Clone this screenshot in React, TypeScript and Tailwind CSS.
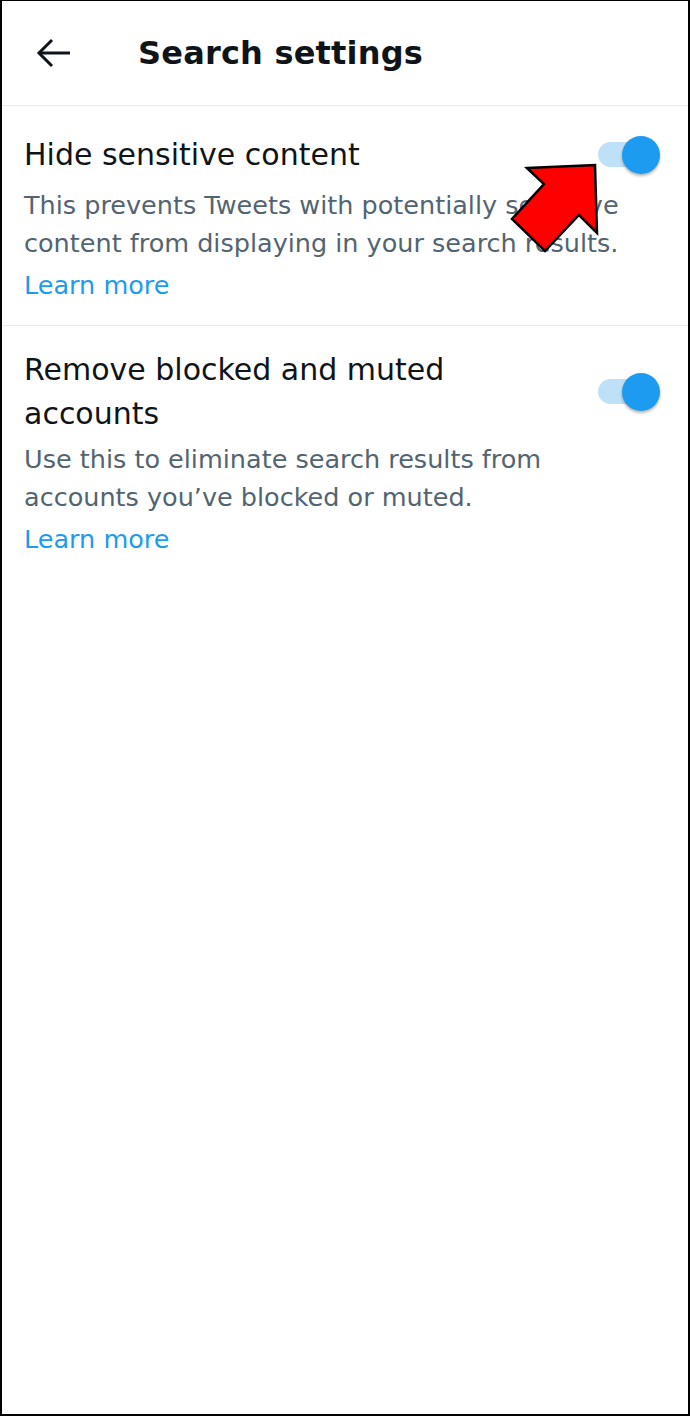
import React from "react";

function Toggle() {
  return (
    <div className="relative h-[54px] w-[62px] shrink-0">
      <div className="absolute left-0 top-[14px] h-[25px] w-[50px] rounded-full bg-[#bfe1f8]" />
      <div className="absolute right-0 top-[8px] h-[38px] w-[38px] rounded-full bg-[#1d9bf0] shadow-[0_2px_3px_rgba(0,0,0,0.3)]" />
    </div>
  );
}

type RowProps = {
  title: string;
  desc: string;
};

function SettingRow({ title, desc }: RowProps) {
  return (
    <div className="border-b border-[#e6ebed] pb-[21px] pl-[22px] pt-[22px] last:border-b-0">
      <div className="flex items-center justify-between pr-[28px]">
        <h2 className="w-[530px] text-[30px] leading-[44px] text-[#0f1419]">{title}</h2>
        <Toggle />
      </div>
      <p className="mt-[4px] pr-[40px] text-[25.5px] leading-[38px] text-[#536471]">{desc}</p>
      <a className="mt-[4px] block text-[25.5px] leading-[38px] text-[#1d9bf0]" href="#">
        Learn more
      </a>
    </div>
  );
}

export default function App() {
  return (
    <div className="relative h-[1416px] w-[690px] overflow-hidden border-x-2 border-b-2 border-t border-black bg-white font-['DejaVu_Sans',sans-serif]">
      <header className="flex h-[105px] items-center border-b border-[#e6ebed]">
        <button className="ml-[34px] flex h-[32px] w-[36px] items-center justify-center">
          <svg width="36" height="32" viewBox="0 0 36 32" fill="none" stroke="#0f1419" strokeWidth="3">
            <path d="M3 16 H34" />
            <path d="M16 3 L3 16 L16 29" strokeLinejoin="miter" />
          </svg>
        </button>
        <h1 className="ml-[66px] text-[32px] font-semibold tracking-[0.2px] text-[#0f1419]">Search settings</h1>
      </header>

      <section>
        <SettingRow
          title="Hide sensitive content"
          desc="This prevents Tweets with potentially sensitive content from displaying in your search results."
        />
        <SettingRow
          title="Remove blocked and muted accounts"
          desc="Use this to eliminate search results from accounts you’ve blocked or muted."
        />
      </section>

      <svg className="absolute left-0 top-0" width="690" height="300" viewBox="0 0 690 300">
        <polygon
          points="525,167 593,164 595,232 577,214 543,250 510,218 542,183"
          fill="#ff0000"
          stroke="#000"
          strokeWidth="2.5"
          strokeLinejoin="miter"
        />
      </svg>
    </div>
  );
}
